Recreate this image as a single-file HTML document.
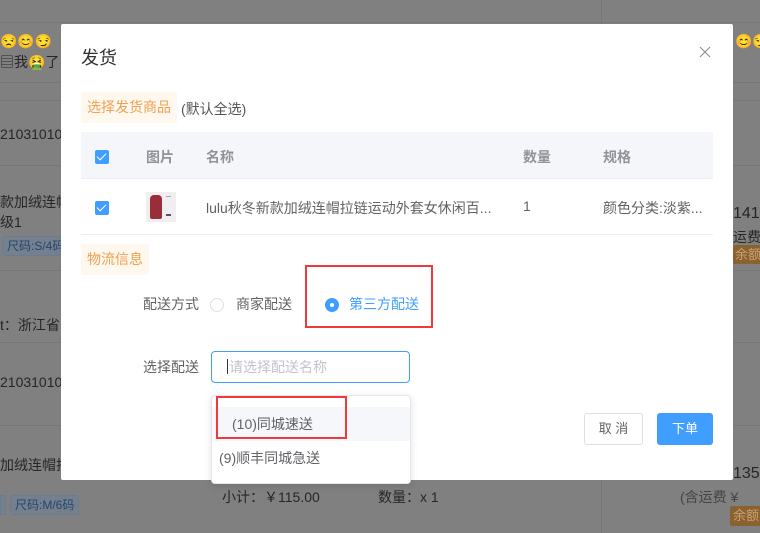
<!DOCTYPE html>
<html><head><meta charset="utf-8"><style>
*{margin:0;padding:0;box-sizing:border-box}
body{width:760px;height:533px;overflow:hidden;background:#808080;font-family:"Liberation Sans","Noto Sans CJK SC",sans-serif;position:relative;font-size:13px}
.a{position:absolute;white-space:nowrap}
.bgt{color:#262626;font-size:14px}
.line{position:absolute;background:#767676}
.m{position:absolute;left:61px;top:24px;width:672px;height:456px;background:#fff;border-radius:2px}
.tag{position:absolute;background:#fef8ee;color:#f0a050;font-size:14px;padding:0 6px;height:31px;line-height:31px}
.cb{position:absolute;width:14px;height:14px;background:#409eff;border-radius:2px}
.cb:after{content:"";position:absolute;left:4px;top:1px;width:4px;height:8px;border:solid #fff;border-width:0 1.5px 1.5px 0;transform:rotate(45deg)}
.th{color:#909399;font-weight:bold;font-size:14px}
.td{color:#606266;font-size:14px}
.red{position:absolute;border:2px solid #f03a3a}
</style></head><body>
<div class="line" style="left:0;top:22px;width:760px;height:1px;background:#777"></div>
<div class="line" style="left:601px;top:0;width:1px;height:533px"></div>
<div class="line" style="left:0;top:82px;width:760px;height:1px"></div>
<div class="line" style="left:0;top:100px;width:760px;height:1px"></div>
<div class="line" style="left:0;top:165px;width:760px;height:1px"></div>
<div class="line" style="left:0;top:270px;width:760px;height:1px"></div>
<div class="line" style="left:0;top:342px;width:760px;height:1px"></div>
<div class="line" style="left:0;top:425px;width:760px;height:1px"></div>
<div class="a bgt" style="left:0;top:33px;font-size:14px">😒😊😏</div>
<div class="a bgt" style="left:0;top:52px">▤我🤮了</div>
<div class="a bgt" style="left:735px;top:33px">😊😏</div>
<div class="a bgt" style="left:0;top:126px">21031010</div>
<div class="a bgt" style="left:0;top:192px">款加绒连帽</div>
<div class="a bgt" style="left:0;top:212px">级1</div>
<div class="a" style="left:2px;top:236px;height:20px;padding:0 4px;line-height:18px;border:1px solid #6b7c90;background:#74808e;color:#25466e;font-size:12px;border-radius:3px">尺码:S/4码</div>
<div class="a bgt" style="left:0;top:315px">t：浙江省</div>
<div class="a bgt" style="left:0;top:374px">21031010</div>
<div class="a bgt" style="left:0;top:455px">加绒连帽拉</div>
<div class="a" style="left:0;top:495px;height:20px;width:6px;border:1px solid #6b7c90;background:#74808e"></div>
<div class="a" style="left:10px;top:495px;height:20px;padding:0 4px;line-height:18px;border:1px solid #6b7c90;background:#74808e;color:#25466e;font-size:12px;border-radius:3px">尺码:M/6码</div>
<div class="a bgt" style="left:222px;top:487px">小计：￥115.00</div>
<div class="a bgt" style="left:378px;top:487px">数量：x 1</div>
<div class="a bgt" style="left:733px;top:205px;font-size:16px">141</div>
<div class="a bgt" style="left:733px;top:227px">运费</div>
<div class="a" style="left:733px;top:245px;background:#8a6230;color:#c9a274;padding:0 2px;height:19px;line-height:19px;border-radius:2px">余额</div>
<div class="a bgt" style="left:733px;top:465px;font-size:16px">135</div>
<div class="a bgt" style="left:680px;top:487px;color:#444">(含运费 ¥</div>
<div class="a" style="left:730px;top:506px;background:#8a6230;color:#c9a274;padding:0 3px;height:20px;line-height:20px;border-radius:2px">余额</div>

<div class="m">
 <div class="a" style="left:20px;top:20px;font-size:18px;color:#303133">发货</div>
 <svg class="a" style="left:638px;top:22px" width="12" height="12" viewBox="0 0 12 12"><path d="M1 1L11 11M11 1L1 11" stroke="#909399" stroke-width="1.2"/></svg>
 <div class="tag" style="left:20px;top:68px">选择发货商品</div>
 <div class="a td" style="left:120px;top:75px;color:#555">(默认全选)</div>
 <div class="a" style="left:20px;top:108px;width:632px;height:47px;background:#f5f6fa;border-bottom:1px solid #ebeef5"></div>
 <div class="cb" style="left:34px;top:126px"></div>
 <div class="a th" style="left:85px;top:123px">图片</div>
 <div class="a th" style="left:145px;top:123px">名称</div>
 <div class="a th" style="left:462px;top:123px">数量</div>
 <div class="a th" style="left:542px;top:123px">规格</div>
 <div class="a" style="left:20px;top:210px;width:632px;height:1px;background:#ebeef5"></div>
 <div class="cb" style="left:34px;top:177px"></div>
 <div class="a" style="left:85px;top:168px;width:30px;height:30px;background:#f0eef0">
  <div class="a" style="left:4px;top:3px;width:12px;height:24px;background:#9a2d3a;border-radius:4px 4px 2px 2px"></div>
  <div class="a" style="left:20px;top:4px;width:5px;height:20px;border-top:1px solid #aaa;border-bottom:2px solid #555"></div>
 </div>
 <div class="a td" style="left:145px;top:174px">lulu秋冬新款加绒连帽拉链运动外套女休闲百...</div>
 <div class="a td" style="left:462px;top:174px">1</div>
 <div class="a td" style="left:542px;top:174px">颜色分类:淡紫...</div>
 <div class="tag" style="left:20px;top:220px">物流信息</div>
 <div class="a td" style="left:82px;top:270px">配送方式</div>
 <div class="a" style="left:149px;top:274px;width:14px;height:14px;border:1px solid #dcdfe6;border-radius:50%"></div>
 <div class="a td" style="left:175px;top:270px">商家配送</div>
 <div class="a" style="left:264px;top:274px;width:14px;height:14px;background:#409eff;border-radius:50%"><div class="a" style="left:5px;top:5px;width:4px;height:4px;background:#fff;border-radius:50%"></div></div>
 <div class="a" style="left:288px;top:270px;color:#409eff;font-size:14px">第三方配送</div>
 <div class="a td" style="left:82px;top:333px">选择配送</div>
 <div class="a" style="left:150px;top:327px;width:199px;height:32px;border:1px solid #409eff;border-radius:4px"></div>
 <div class="a" style="left:166px;top:335px;width:1px;height:15px;background:#333"></div>
 <div class="a" style="left:168px;top:333px;color:#c0c4cc;font-size:14px">请选择配送名称</div>
 <div class="a" style="left:523px;top:389px;width:59px;height:32px;border:1px solid #dcdfe6;border-radius:3px;color:#606266;text-align:center;line-height:30px">取 消</div>
 <div class="a" style="left:596px;top:389px;width:56px;height:32px;background:#409eff;border-radius:3px;color:#fff;text-align:center;line-height:32px">下单</div>
</div>
<div class="a" style="left:211px;top:395px;width:200px;height:89px;background:#fff;border:1px solid #e4e7ed;border-radius:4px;box-shadow:0 2px 8px rgba(0,0,0,.12)">
 <div class="a" style="left:0;top:11px;width:198px;height:34px;background:#f5f7fa"></div>
 <div class="a" style="left:20px;top:18px;color:#606266;font-size:14px">(10)同城速送</div>
 <div class="a" style="left:7px;top:52px;color:#606266;font-size:14px">(9)顺丰同城急送</div>
</div>
<div class="red" style="left:305px;top:265px;width:128px;height:63px"></div>
<div class="red" style="left:216px;top:396px;width:131px;height:43px"></div>
</body></html>
